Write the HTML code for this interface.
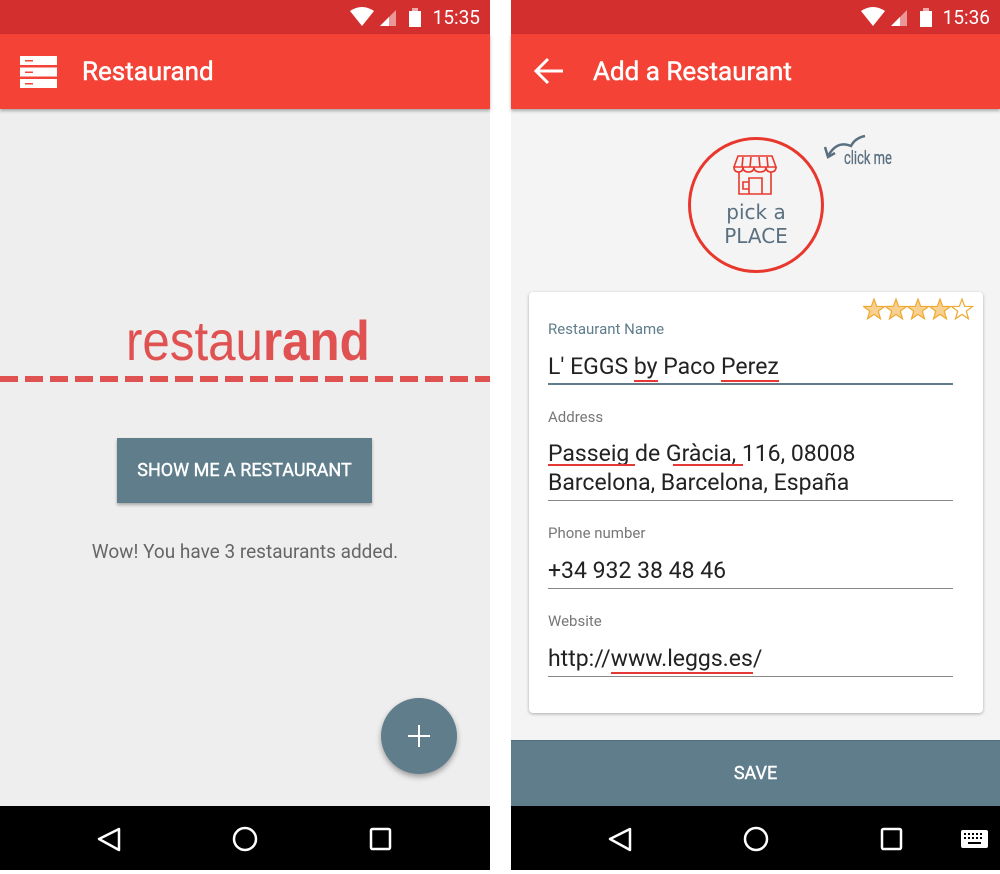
<!DOCTYPE html>
<html><head><meta charset="utf-8"><style>
*{margin:0;padding:0;box-sizing:border-box}
body{width:1000px;height:870px;background:#fff;position:relative;overflow:hidden;font-family:"Roboto","Liberation Sans",sans-serif}
.ph{position:absolute;top:0;height:870px}
.sb{position:absolute;left:0;right:0;top:0;height:34px;background:#d32f2f;color:#fff}
.tb{position:absolute;left:0;right:0;top:34px;height:75px;background:#f44336;color:#fff;box-shadow:0 2px 3px rgba(0,0,0,.3)}
.nav{position:absolute;left:0;right:0;top:806px;height:64px;background:#000}
.time{position:absolute;right:10px;top:6px;font-size:19px}
.t{position:absolute;left:82px;top:23px;font-size:26px;-webkit-text-stroke:.5px #fff}
.lbl{position:absolute;left:548px;font-size:15px;color:#777}
.val{position:absolute;left:548px;font-size:23px;color:#222;line-height:29px}
.ln{position:absolute;left:548px;width:405px;height:1px;background:#888}
.u{border-bottom:2px solid #e53935}
</style></head><body>
<!-- left -->
<div class="ph" style="left:0;width:490px;background:#eee">
 <div class="sb">
  <svg style="position:absolute;left:350px;top:7px" width="80" height="22"><path d="M0 4 Q12 -4 24 4 L12 19Z" fill="#fff"/><path d="M30 19 L46 3 L46 19Z" fill="#fff" opacity=".5"/><path d="M30 19 L39 10 L39 19Z" fill="#fff"/><rect x="59" y="4" width="12" height="16" fill="#fff"/><rect x="62" y="1" width="6" height="3" fill="#fff" opacity=".6"/></svg>
  <div class="time">15:35</div>
 </div>
 <div class="tb">
  <svg style="position:absolute;left:20px;top:22px" width="37" height="32"><rect y="0" width="37" height="9" fill="#fff"/><rect y="11.5" width="37" height="9" fill="#fff"/><rect y="23" width="37" height="9" fill="#fff"/><rect x="5" y="4" width="8" height="1.5" fill="#f44336"/><rect x="5" y="15.5" width="8" height="1.5" fill="#f44336"/><rect x="5" y="27" width="8" height="1.5" fill="#f44336"/></svg>
  <div class="t">Restaurand</div>
 </div>
 <div style="position:absolute;left:126px;top:313px;font-size:56px;line-height:56px;color:#e05252;font-family:'Liberation Sans',sans-serif;transform:scaleX(.88);transform-origin:left;white-space:nowrap">restau<b>rand</b></div>
 <div style="position:absolute;left:0;top:376px;width:490px;height:6px;background:repeating-linear-gradient(90deg,#e05252 0 18px,transparent 18px 25px)"></div>
 <div style="position:absolute;left:117px;top:438px;width:255px;height:65px;background:#607d8b;color:#fff;font-size:18px;text-align:center;line-height:65px;box-shadow:0 2px 3px rgba(0,0,0,.3);-webkit-text-stroke:.4px #fff">SHOW ME A RESTAURANT</div>
 <div style="position:absolute;left:0;width:490px;top:540px;text-align:center;font-size:19px;color:#666">Wow! You have 3 restaurants added.</div>
 <div style="position:absolute;left:381px;top:698px;width:76px;height:76px;border-radius:50%;background:#607d8b;box-shadow:0 3px 6px rgba(0,0,0,.35)"><svg width="76" height="76"><path d="M38 27V49M27 38H49" stroke="#fff" stroke-width="2"/></svg></div>
 <div class="nav"><svg width="490" height="64"><path d="M119 23 L99 33 L119 44Z" fill="none" stroke="#fff" stroke-width="2.5" stroke-linejoin="round"/><circle cx="245" cy="33" r="11" fill="none" stroke="#fff" stroke-width="2.5"/><rect x="371" y="23" width="19" height="20" rx="1.5" fill="none" stroke="#fff" stroke-width="2.5"/></svg></div>
</div>
<!-- right -->
<div class="ph" style="left:511px;width:489px;background:#f4f4f4">
 <div class="sb">
  <svg style="position:absolute;left:350px;top:7px" width="80" height="22"><path d="M0 4 Q12 -4 24 4 L12 19Z" fill="#fff"/><path d="M30 19 L46 3 L46 19Z" fill="#fff" opacity=".5"/><path d="M30 19 L39 10 L39 19Z" fill="#fff"/><rect x="59" y="4" width="12" height="16" fill="#fff"/><rect x="62" y="1" width="6" height="3" fill="#fff" opacity=".6"/></svg>
  <div class="time">15:36</div>
 </div>
 <div class="tb">
  <svg style="position:absolute;left:22px;top:22px" width="32" height="30"><path d="M3 15H30M15 3L3 15L15 27" stroke="#fff" stroke-width="3" fill="none"/></svg>
  <div class="t">Add a Restaurant</div>
 </div>
 <div style="position:absolute;left:177px;top:137px;width:136px;height:136px;border:3px solid #e8382e;border-radius:50%"></div>
 <svg style="position:absolute;left:222px;top:153px" width="46" height="44"><path d="M5 3H39L43 14H1Z M1 14Q1 19 5.5 19Q10 19 10 14Q10 19 15.5 19Q21 19 21 14Q21 19 27 19Q33 19 33 14Q33 19 38 19Q43 19 43 14 M10 4L9 14M18 4L17 14M26 4L27 14M34 4L35 14 M6 19V41H38V19 M16 41V25H29V41 M10 29H16V36H10Z" fill="none" stroke="#e8382e" stroke-width="1.6"/></svg>
 <div style="position:absolute;left:177px;width:136px;top:200px;text-align:center;color:#5a7080;font-size:20px;line-height:24px;font-family:'DejaVu Sans',sans-serif">pick a<br>PLACE</div>
 <svg style="position:absolute;left:312px;top:134px" width="44" height="28"><path d="M5 22Q14 6 28 12Q32 4 42 2" fill="none" stroke="#5a7080" stroke-width="2.5"/><path d="M2 13L5 23L12 19" fill="none" stroke="#5a7080" stroke-width="2.5"/></svg>
 <div style="position:absolute;left:333px;top:148px;font-size:18px;color:#5a7080;transform:scaleX(.72);transform-origin:left;-webkit-text-stroke:.3px #5a7080">click me</div>
 <div style="position:absolute;left:18px;top:292px;width:454px;height:421px;background:#fff;border-radius:4px;box-shadow:0 1px 3px rgba(0,0,0,.3)"></div>
 <svg style="position:absolute;left:352px;top:298px" width="113" height="24"><g stroke="#f0a830" stroke-width="1.2"><path id="s" d="M11 1L13.6 8.3L21.5 8.5L15.3 13.2L17.5 20.8L11 16.4L4.5 20.8L6.7 13.2L0.5 8.5L8.4 8.3Z" fill="#f8d090"/><use href="#s" x="22"/><use href="#s" x="44"/><use href="#s" x="66"/><path d="M99 1L101.6 8.3L109.5 8.5L103.3 13.2L105.5 20.8L99 16.4L92.5 20.8L94.7 13.2L88.5 8.5L96.4 8.3Z" fill="#fff"/></g></svg>
</div>
<div class="lbl" style="top:320px;color:#5f7d8b">Restaurant Name</div>
<div class="val" style="top:352px">L' EGGS <span class="u">by</span> Paco <span class="u">Perez</span></div>
<div class="ln" style="top:383px;height:2px;background:#5f7d8b"></div>
<div class="lbl" style="top:408px">Address</div>
<div class="val" style="top:439px">Passeig de Gràcia, 116, 08008<br>Barcelona, Barcelona, España</div>
<div style="position:absolute;left:548px;top:464px;width:87px;height:2px;background:#e53935"></div>
<div style="position:absolute;left:673px;top:464px;width:70px;height:2px;background:#e53935"></div>
<div class="ln" style="top:500px"></div>
<div class="lbl" style="top:524px">Phone number</div>
<div class="val" style="top:556px">+34 932 38 48 46</div>
<div class="ln" style="top:588px"></div>
<div class="lbl" style="top:612px">Website</div>
<div class="val" style="top:644px">http://<span class="u">www.leggs.es</span>/</div>
<div class="ln" style="top:676px"></div>
<div style="position:absolute;left:511px;top:740px;width:489px;height:66px;background:#607d8b;color:#fff;font-size:18px;text-align:center;line-height:66px;border-top:1px solid #50707e;-webkit-text-stroke:.4px #fff">SAVE</div>
<div class="nav" style="left:511px"><svg width="489" height="64"><path d="M119 23 L99 33 L119 44Z" fill="none" stroke="#fff" stroke-width="2.5" stroke-linejoin="round"/><circle cx="245" cy="33" r="11" fill="none" stroke="#fff" stroke-width="2.5"/><rect x="371" y="23" width="19" height="20" rx="1.5" fill="none" stroke="#fff" stroke-width="2.5"/><rect x="450" y="24" width="27" height="18" rx="2" fill="#fff"/><g fill="#000"><rect x="453" y="27" width="2" height="2"/><rect x="457" y="27" width="2" height="2"/><rect x="461" y="27" width="2" height="2"/><rect x="465" y="27" width="2" height="2"/><rect x="469" y="27" width="2" height="2"/><rect x="453" y="31" width="2" height="2"/><rect x="457" y="31" width="2" height="2"/><rect x="461" y="31" width="2" height="2"/><rect x="465" y="31" width="2" height="2"/><rect x="469" y="31" width="2" height="2"/><rect x="457" y="36" width="13" height="2"/></g></svg></div>
</body></html>
